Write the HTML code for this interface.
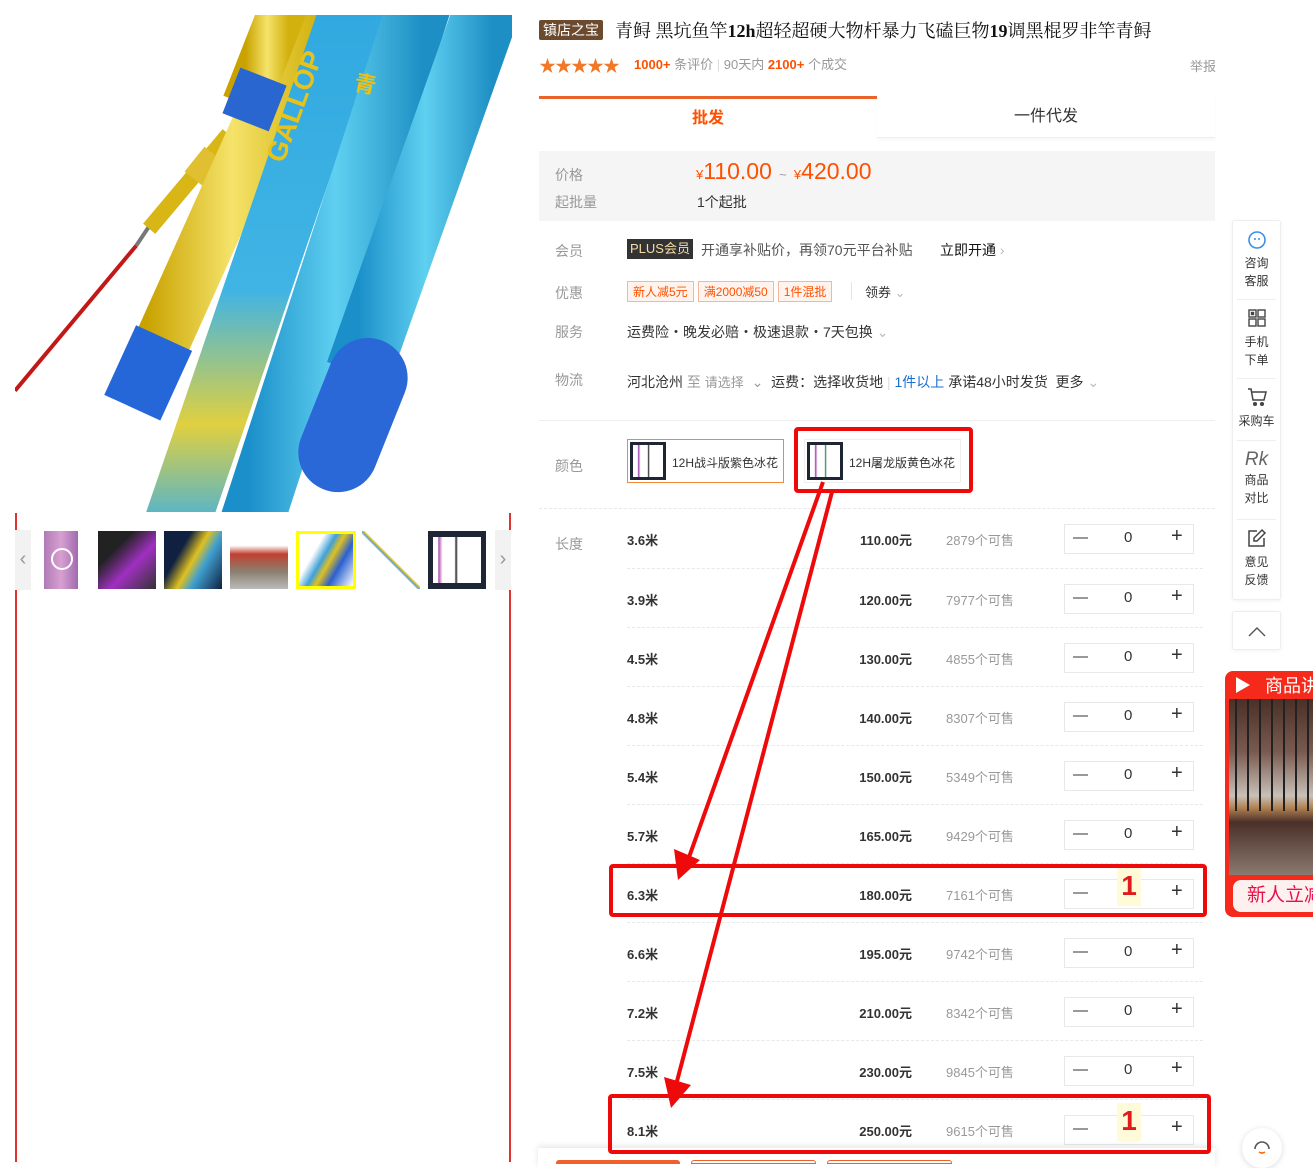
<!DOCTYPE html>
<html><head><meta charset="utf-8"><style>
*{margin:0;padding:0;box-sizing:border-box}
body{width:1313px;height:1162px;overflow:hidden;background:#fff;font-family:"Liberation Sans","Noto Sans CJK SC",sans-serif;color:#333;position:relative;font-size:14px}
.a{position:absolute;white-space:nowrap}
.gray{color:#999}
.lbl{color:#999;font-size:14px}
.row{position:absolute;left:627px;width:576px;height:59px;border-top:1px dashed #e8e8e8}
.row .len{position:absolute;left:0;top:21px;font:bold 13px "Liberation Sans","Noto Sans CJK SC",sans-serif;color:#333}
.row .pr{position:absolute;right:291px;top:21px;font:bold 13px "Liberation Sans","Noto Sans CJK SC",sans-serif;color:#333}
.row .st{position:absolute;left:319px;top:21px;font-size:13px;color:#999}
.row .stp{position:absolute;left:437px;top:15px;width:130px;height:30px;border:1px solid #e8e8e8;font-size:15px}
.stp span{position:absolute;top:4px}
.stp .pl{font-size:20px;top:0}
.coupon{display:inline-block;border:1px solid #f5b79b;background:#fff3ee;color:#ff5000;font-size:12px;padding:1px 5px;margin-right:4px}
.side{position:absolute;left:1232px;width:49px;background:#fff;border:1px solid #eee;border-radius:3px;box-shadow:0 1px 4px rgba(0,0,0,.06)}
.si{height:79px;text-align:center;font-size:12px;color:#333;border-bottom:1px solid #eee;margin:0 4px;padding-top:8px;line-height:18px}
</style></head><body>

<!-- main image -->
<svg class="a" style="left:15px;top:15px" width="497" height="497" viewBox="0 0 500 500">
<defs>
<linearGradient id="yl" x1="0" y1="0" x2="1" y2="0"><stop offset="0" stop-color="#c9a200"/><stop offset=".5" stop-color="#f5e36a"/><stop offset="1" stop-color="#d2b10e"/></linearGradient>
<linearGradient id="bl" x1="0" y1="0" x2="1" y2="0"><stop offset="0" stop-color="#1a8fc9"/><stop offset=".5" stop-color="#5fd0f0"/><stop offset="1" stop-color="#1e8fc4"/></linearGradient>
<linearGradient id="cy" x1="0" y1="0" x2="0" y2="1"><stop offset="0" stop-color="#30a8e0"/><stop offset=".55" stop-color="#40b4e4"/><stop offset=".8" stop-color="#e0d040"/><stop offset="1" stop-color="#40b0e0"/></linearGradient>
</defs>
<line x1="122" y1="232" x2="0" y2="378" stroke="#c21818" stroke-width="4"/>
<line x1="140" y1="205" x2="122" y2="232" stroke="#777" stroke-width="4"/>
<line x1="215" y1="120" x2="135" y2="215" stroke="#d8b615" stroke-width="16"/>
<line x1="200" y1="140" x2="180" y2="165" stroke="#e0c030" stroke-width="24"/>
<line x1="305" y1="-20" x2="132" y2="365" stroke="url(#yl)" stroke-width="56"/>
<line x1="150" y1="325" x2="118" y2="395" stroke="#2566d8" stroke-width="62"/>
<line x1="275" y1="-20" x2="232" y2="90" stroke="url(#yl)" stroke-width="48"/>
<line x1="250" y1="62" x2="232" y2="108" stroke="#2a66d0" stroke-width="50"/>
<line x1="345" y1="-20" x2="160" y2="520" stroke="url(#cy)" stroke-width="66"/>
<line x1="410" y1="-20" x2="235" y2="520" stroke="url(#bl)" stroke-width="64"/>
<line x1="480" y1="-20" x2="345" y2="360" stroke="url(#bl)" stroke-width="66"/>
<line x1="355" y1="365" x2="325" y2="440" stroke="#2a68d8" stroke-width="80" stroke-linecap="round"/>
<text x="270" y="150" fill="#e8c21a" font-size="28" font-weight="bold" transform="rotate(-70 270 150)" font-family="Liberation Sans">GALLOP</text>
<text x="340" y="75" fill="#e8c21a" font-size="22" font-weight="bold" font-family="Noto Sans CJK SC" transform="rotate(12 340 75)">青</text>
</svg>

<!-- red side lines -->
<div class="a" style="left:15px;top:513px;width:2px;height:649px;background:#d33"></div>
<div class="a" style="left:509px;top:513px;width:2px;height:649px;background:#d33"></div>
<!-- thumbs -->
<div class="a" style="left:15px;top:530px;width:497px;height:60px;background:#fff"></div>
<div class="a" style="left:15px;top:530px;width:16px;height:60px;background:#f2f2f2;color:#999;font-size:20px;line-height:58px;text-align:center">‹</div>
<div class="a" style="left:495px;top:530px;width:16px;height:60px;background:#f2f2f2;color:#999;font-size:20px;line-height:58px;text-align:center">›</div>
<div class="a" style="left:44px;top:531px;width:34px;height:58px;background:linear-gradient(90deg,#b07ab8,#d8a0d0,#a06ab0)"></div>
<div class="a" style="left:51px;top:548px;width:22px;height:22px;border:2px solid #fff;border-radius:50%"></div>
<div class="a" style="left:98px;top:531px;width:58px;height:58px;background:linear-gradient(135deg,#222 30%,#a030c0 60%,#333)"></div>
<div class="a" style="left:164px;top:531px;width:58px;height:58px;background:linear-gradient(120deg,#102040 30%,#e0c020 50%,#40a0d0 65%,#102040)"></div>
<div class="a" style="left:230px;top:531px;width:58px;height:58px;background:linear-gradient(180deg,#fff 25%,#c04030 40%,#8a8070 70%,#bbb)"></div>
<div class="a" style="left:296px;top:531px;width:60px;height:58px;border:3px solid #ff0;background:linear-gradient(120deg,#fff 30%,#40a0d8 45%,#e0c020 55%,#2a60d0 70%,#fff)"></div>
<div class="a" style="left:362px;top:531px;width:58px;height:58px;background:linear-gradient(45deg,#fff 47%,#5aa0d0 49%,#e0c020 51%,#fff 53%)"></div>
<div class="a" style="left:428px;top:531px;width:58px;height:58px;background:#1e2535"><div style="margin:6px 5px;height:46px;background:linear-gradient(90deg,#fff 10%,#b050b0 12%,#fff 20%,#fff 45%,#222 48%,#fff 52%,#fff 90%)"></div></div>

<!-- title -->
<div class="a" style="left:539px;top:20px;height:20px;background:#6b4a2e;color:#fff;font-size:14px;padding:0 4px;line-height:20px;border-radius:2px">镇店之宝</div>
<div class="a" style="left:615px;top:17px;font:18px 'Liberation Serif','Noto Serif CJK SC',serif;color:#111">青鲟 黑坑鱼竿<b>12h</b>超轻超硬大物杆暴力飞磕巨物<b>19</b>调黑棍罗非竿青鲟</div>
<div class="a" style="left:539px;top:52px;color:#f0782a;font-size:17px;letter-spacing:-1px">★★★★★</div>
<div class="a" style="left:634px;top:54px;font-size:13px;color:#999"><b style="color:#ff5000">1000+</b> 条评价 <span style="color:#ddd">|</span> 90天内 <b style="color:#ff5000">2100+</b> 个成交</div>
<div class="a gray" style="left:1190px;top:56px;font-size:13px">举报</div>

<!-- tabs -->
<div class="a" style="left:539px;top:96px;width:338px;height:3px;background:#e9632a"></div>
<div class="a" style="left:539px;top:99px;width:338px;height:40px;text-align:center;line-height:40px;color:#ff5000;font-size:16px;font-weight:bold">批发</div>
<div class="a" style="left:877px;top:97px;width:338px;height:41px;text-align:center;line-height:40px;font-size:16px;border-bottom:1px solid #eee;box-shadow:0 2px 3px rgba(0,0,0,.04)">一件代发</div>

<div class="a" style="left:539px;top:151px;width:676px;height:70px;background:#f5f5f5"></div>
<div class="a lbl" style="left:555px;top:165px">价格</div>
<div class="a" style="left:696px;top:158px;color:#ff5000"><span style="font-size:13px">¥</span><span style="font-size:23px">110.00</span><span style="font-size:13px;color:#999">&nbsp;&nbsp;~&nbsp;&nbsp;</span><span style="font-size:13px">¥</span><span style="font-size:23px">420.00</span></div>
<div class="a lbl" style="left:555px;top:192px">起批量</div>
<div class="a" style="left:697px;top:192px">1个起批</div>

<div class="a lbl" style="left:555px;top:241px">会员</div>
<div class="a" style="left:627px;top:239px;background:#333;color:#f5dca8;font-size:13px;padding:0 3px;line-height:20px">PLUS会员</div>
<div class="a" style="left:701px;top:240px;color:#555">开通享补贴价，再领70元平台补贴</div>
<div class="a" style="left:940px;top:240px;color:#111">立即开通 <span style="color:#bbb">›</span></div>

<div class="a lbl" style="left:555px;top:283px">优惠</div>
<div class="a" style="left:627px;top:281px"><span class="coupon">新人减5元</span><span class="coupon">满2000减50</span><span class="coupon">1件混批</span></div>
<div class="a" style="left:851px;top:282px;width:1px;height:18px;background:#e5e5e5"></div>
<div class="a" style="left:865px;top:282px;font-size:13px">领券 <span style="color:#bbb">⌄</span></div>

<div class="a lbl" style="left:555px;top:322px">服务</div>
<div class="a" style="left:627px;top:322px">运费险・晚发必赔・极速退款・7天包换 <span style="color:#bbb">⌄</span></div>

<div class="a lbl" style="left:555px;top:370px">物流</div>
<div class="a" style="left:627px;top:372px">河北沧州 <span class="gray">至 <span style="font-size:13px">请选择</span> &nbsp;⌄</span> &nbsp;运费：选择收货地 <span style="color:#ddd">|</span> <span style="color:#1a6fd0">1件以上</span> 承诺48小时发货 &nbsp;更多 <span style="color:#bbb">⌄</span></div>

<div class="a" style="left:539px;top:420px;width:676px;height:1px;background:#eee"></div>
<div class="a lbl" style="left:555px;top:456px">颜色</div>
<div class="a" style="left:627px;top:439px;width:157px;height:44px;border:1px solid #f08a3a;background:#fff"><div style="position:absolute;left:2px;top:2px;width:36px;height:38px;background:#1e2535;padding:3px"><div style="height:32px;background:linear-gradient(90deg,#fff 15%,#a040b0 18%,#fff 25%,#fff 48%,#222 52%,#fff 56%)"></div></div><span style="position:absolute;left:44px;top:14px;font-size:12px">12H战斗版紫色冰花</span></div>
<div class="a" style="left:804px;top:439px;width:157px;height:44px;border:1px solid #eee;background:#fff"><div style="position:absolute;left:2px;top:2px;width:36px;height:38px;background:#1e2535;padding:3px"><div style="height:32px;background:linear-gradient(90deg,#fff 15%,#a040b0 18%,#fff 25%,#fff 48%,#2a8050 52%,#fff 56%)"></div></div><span style="position:absolute;left:44px;top:14px;font-size:12px">12H屠龙版黄色冰花</span></div>

<div class="a" style="left:539px;top:508px;width:676px;border-top:1px dashed #e8e8e8"></div>
<div class="a lbl" style="left:555px;top:534px">长度</div>

<div class="row" style="top:509px;border-top:none"><span class="len">3.6米</span><span class="pr">110.00元</span><span class="st">2879个可售</span><div class="stp"><span style="left:8px">—</span><span style="left:59px">0</span><span class="pl" style="left:106px">+</span></div></div>
<div class="row" style="top:568px"><span class="len">3.9米</span><span class="pr">120.00元</span><span class="st">7977个可售</span><div class="stp"><span style="left:8px">—</span><span style="left:59px">0</span><span class="pl" style="left:106px">+</span></div></div>
<div class="row" style="top:627px"><span class="len">4.5米</span><span class="pr">130.00元</span><span class="st">4855个可售</span><div class="stp"><span style="left:8px">—</span><span style="left:59px">0</span><span class="pl" style="left:106px">+</span></div></div>
<div class="row" style="top:686px"><span class="len">4.8米</span><span class="pr">140.00元</span><span class="st">8307个可售</span><div class="stp"><span style="left:8px">—</span><span style="left:59px">0</span><span class="pl" style="left:106px">+</span></div></div>
<div class="row" style="top:745px"><span class="len">5.4米</span><span class="pr">150.00元</span><span class="st">5349个可售</span><div class="stp"><span style="left:8px">—</span><span style="left:59px">0</span><span class="pl" style="left:106px">+</span></div></div>
<div class="row" style="top:804px"><span class="len">5.7米</span><span class="pr">165.00元</span><span class="st">9429个可售</span><div class="stp"><span style="left:8px">—</span><span style="left:59px">0</span><span class="pl" style="left:106px">+</span></div></div>
<div class="row" style="top:863px"><span class="len">6.3米</span><span class="pr">180.00元</span><span class="st">7161个可售</span><div class="stp"><span style="left:8px">—</span><span style="left:59px;color:#ccc">0</span><span class="pl" style="left:106px">+</span></div></div>
<div class="row" style="top:922px"><span class="len">6.6米</span><span class="pr">195.00元</span><span class="st">9742个可售</span><div class="stp"><span style="left:8px">—</span><span style="left:59px">0</span><span class="pl" style="left:106px">+</span></div></div>
<div class="row" style="top:981px"><span class="len">7.2米</span><span class="pr">210.00元</span><span class="st">8342个可售</span><div class="stp"><span style="left:8px">—</span><span style="left:59px">0</span><span class="pl" style="left:106px">+</span></div></div>
<div class="row" style="top:1040px"><span class="len">7.5米</span><span class="pr">230.00元</span><span class="st">9845个可售</span><div class="stp"><span style="left:8px">—</span><span style="left:59px">0</span><span class="pl" style="left:106px">+</span></div></div>
<div class="row" style="top:1099px"><span class="len">8.1米</span><span class="pr">250.00元</span><span class="st">9615个可售</span><div class="stp"><span style="left:8px">—</span><span style="left:59px;color:#ccc">0</span><span class="pl" style="left:106px">+</span></div></div>

<!-- bottom bar -->
<div class="a" style="left:538px;top:1148px;width:677px;height:20px;background:#fff;box-shadow:0 -2px 6px rgba(0,0,0,.1)"></div>
<div class="a" style="left:556px;top:1160px;width:124px;height:4px;background:#f0602a;border-radius:3px 3px 0 0"></div>
<div class="a" style="left:691px;top:1160px;width:125px;height:4px;border:1px solid #f0602a;border-radius:3px 3px 0 0"></div>
<div class="a" style="left:827px;top:1160px;width:125px;height:4px;border:1px solid #f0602a;border-radius:3px 3px 0 0"></div>

<!-- highlight 1s -->
<div class="a" style="left:1117px;top:868px;width:24px;height:38px;background:#fffbd8;color:#e01010;font-size:28px;font-weight:bold;text-align:center;line-height:36px;opacity:.95">1</div>
<div class="a" style="left:1117px;top:1103px;width:24px;height:38px;background:#fffbd8;color:#e01010;font-size:28px;font-weight:bold;text-align:center;line-height:36px;opacity:.95">1</div>

<!-- annotations -->
<svg class="a" style="left:0;top:0" width="1313" height="1162">
<g fill="none" stroke="#ee0a0a" stroke-width="4">
<rect x="796" y="429" width="175" height="62" rx="2"/>
<rect x="611" y="866" width="594" height="49" rx="2"/>
<rect x="610" y="1096" width="599" height="56" rx="2"/>
<line x1="823" y1="482" x2="688" y2="860"/>
<line x1="832" y1="492" x2="676" y2="1085"/>
</g>
<polygon points="674,849 700,860 678,880" fill="#ee0a0a"/>
<polygon points="664,1077 691,1085 671,1108" fill="#ee0a0a"/>
</svg>

<!-- right sidebar -->
<div class="side" style="top:220px;height:380px">
<div class="si"><svg width="22" height="20" viewBox="0 0 22 20"><circle cx="11" cy="11" r="8" fill="none" stroke="#3c8ee8" stroke-width="1.6"/><circle cx="9" cy="10" r="1" fill="#3c8ee8"/><circle cx="13" cy="10" r="1" fill="#3c8ee8"/></svg><br>咨询<br>客服</div>
<div class="si"><svg width="20" height="20" viewBox="0 0 20 20" fill="none" stroke="#444" stroke-width="1.4"><rect x="2" y="2" width="7" height="7"/><rect x="11" y="2" width="7" height="7"/><rect x="2" y="11" width="7" height="7"/><rect x="11" y="11" width="7" height="7"/><rect x="4.5" y="4.5" width="2" height="2" fill="#444"/></svg><br>手机<br>下单</div>
<div class="si" style="height:62px"><svg width="22" height="20" viewBox="0 0 22 20" fill="none" stroke="#444" stroke-width="1.5"><path d="M2 2h3l2 11h11l2-8H6"/><circle cx="9" cy="17" r="1.3" fill="#444"/><circle cx="16" cy="17" r="1.3" fill="#444"/></svg><br>采购车</div>
<div class="si"><span style="font-style:italic;font-size:19px;color:#666;line-height:22px">Rk</span><br>商品<br>对比</div>
<div class="si" style="border:none"><svg width="20" height="20" viewBox="0 0 20 20" fill="none" stroke="#444" stroke-width="1.5"><path d="M17 10v8H2V3h8"/><path d="M15 2l3 3-8 8H7v-3z"/></svg><br>意见<br>反馈</div>
</div>
<div class="side" style="top:611px;height:39px;text-align:center;line-height:40px;color:#555"><svg width="18" height="10" viewBox="0 0 18 10"><path d="M1 9l8-8 8 8" fill="none" stroke="#555" stroke-width="1.4"/></svg></div>

<!-- video card -->
<div class="a" style="left:1225px;top:671px;width:100px;height:246px;background:#f52a1a;border-radius:8px"></div>
<div class="a" style="left:1236px;top:677px;width:0;height:0;border-left:14px solid #fff;border-top:8px solid transparent;border-bottom:8px solid transparent"></div>
<div class="a" style="left:1265px;top:672px;color:#fff;font-size:18px">商品讲</div>
<div class="a" style="left:1229px;top:699px;width:90px;height:176px;background:linear-gradient(180deg,#4a3028 0%,#7a5a50 30%,#c8c0b8 55%,#b08050 62%,#4a3028 70%,#8a7a70 100%)"></div>
<div class="a" style="left:1229px;top:699px;width:90px;height:112px;background:repeating-linear-gradient(90deg,transparent 0 6px,#222 6px 8px,transparent 8px 12px)"></div>
<div class="a" style="left:1233px;top:880px;width:90px;height:32px;background:#fff0f0;border-radius:8px;color:#e8104a;font-size:19px;padding-left:14px;line-height:32px">新人立减</div>

<div class="a" style="left:1242px;top:1128px;width:40px;height:40px;border-radius:50%;background:#fff;box-shadow:0 1px 6px rgba(0,0,0,.15);text-align:center;padding-top:10px"><svg width="20" height="20" viewBox="0 0 20 20" fill="none" stroke="#555" stroke-width="1.6"><path d="M3 11a7 7 0 0114 0"/><path d="M7 14q3 2 6 0" stroke="#ff6a00"/></svg></div>
</body></html>
